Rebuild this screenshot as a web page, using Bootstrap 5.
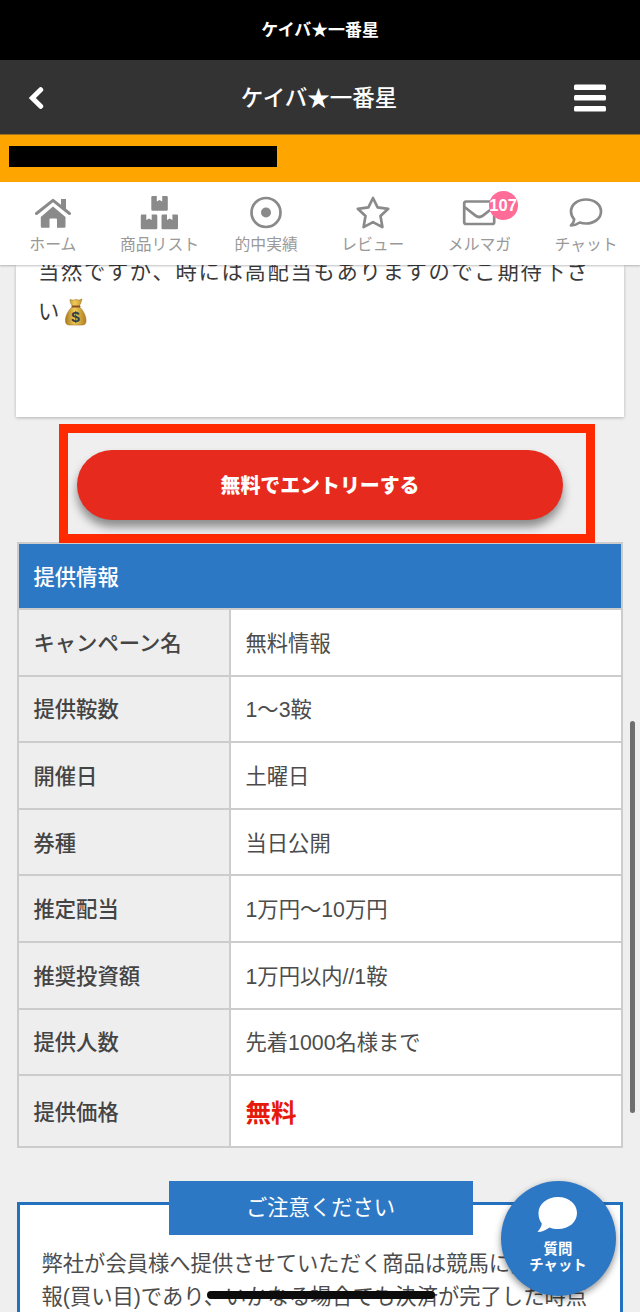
<!DOCTYPE html>
<html lang="ja">
<head>
<meta charset="utf-8">
<meta name="viewport" content="width=device-width, initial-scale=1">
<title>ケイバ★一番星</title>
<link href="https://cdn.jsdelivr.net/npm/bootstrap@5.3.0/dist/css/bootstrap.min.css" rel="stylesheet">
<style>
  body { background: #efefef; color: #444; font-family: "Noto Sans CJK JP", sans-serif; font-size: 21.3px; height: 1312px; overflow: hidden; }
  .latin-mix { font-family: "Liberation Sans", "Noto Sans CJK JP", sans-serif; }
  .status-title { height: 60px; background: #000; font-size: 16.9px; padding-bottom: 2px; }
  .app-header { height: 74px; background: #333; padding: 2px 34px 0 28px; font-size: 22.5px; font-weight: 500; }
  .app-header .header-title { padding-left: 20px; margin-top: -2px; }
  .user-strip { height: 48px; background: #ffa500; padding: 11px 9px 0; border-top: 1px solid #a0701a; }
  .user-mask { width: 268px; height: 21px; background: #000; }
  .tab-strip { height: 83px; box-shadow: 0 1px 2px rgba(0,0,0,.25); z-index: 3; }
  .tab-strip a { color: #999; font-size: 15.8px; line-height: 20px; padding-top: 11px; padding-right: 1px; }
  .tab-strip svg { width: 40px; height: 40px; margin-bottom: 1px; overflow: visible; }
  .count-bubble { top: 9px; left: 62px; width: 29px; height: 29px; background: #ff6c98; font: bold 16.5px/28px "Liberation Sans", sans-serif; }
  .intro-panel { height: 152px; margin: 0 16px; padding: 0 20px 0 22px; color: #3a3a3a; box-shadow: 0 1px 3px rgba(0,0,0,.25); overflow: hidden; }
  .intro-text { margin-top: -15px; line-height: 40.3px; letter-spacing: 1.7px; white-space: nowrap; }
  .intro-text svg { width: 22px; height: 28px; margin-left: 4px; vertical-align: -7px; }
  .entry-frame { width: 536px; height: 119px; margin: 7px 0 0 59px; border: 9px solid #ff2a00; padding: 17px 23px 0 9px; z-index: 2; }
  .entry-button { height: 70px; background: #e62a1e; color: #fff; font-size: 19.9px; font-weight: 900; box-shadow: 0 7px 10px rgba(0,0,0,.42); }
  .offer-table { width: 606px; margin: -1px 0 0 16.5px; border-collapse: collapse; table-layout: fixed; line-height: 30px; }
  .offer-table col:first-child { width: 212px; }
  .offer-table th, .offer-table td { border: 2px solid #ccc; padding: 3px 15.5px 0 15px; height: 66.6px; vertical-align: middle; }
  .offer-table th { background: #eee; font-weight: 500; }
  .offer-table thead th { background: #2d78c5; color: #fff; height: 66px; padding-top: 0; padding-bottom: 1px; }
  .offer-table td { background: #fff; color: #4c4c4c; }
  .offer-table tbody tr:last-child > * { height: 72px; }
  .offer-table tbody .price { color: #e6190d; font-size: 25.5px; font-weight: 700; }
  .caution { margin: 54px 17px 0 16.5px; height: 110px; border: 3px solid #2471bf; border-bottom: 0; padding: 43px 0 0 22px; line-height: 33.3px; white-space: nowrap; color: #4c4c4c; }
  .caution-title { left: 149px; top: -24px; width: 304px; height: 54px; background: #2d78c5; color: #fff; }
  .ink-mask { left: 187px; top: 86px; width: 228px; height: 8px; background: #0c0c0c; border-radius: 4px; }
  .chat-bubble { left: 500.5px; top: 1180.5px; width: 115px; height: 115px; background: #2d78c5; color: #fff; font-size: 14.4px; font-weight: 700; line-height: 16.5px; box-shadow: 0 3px 7px rgba(0,0,0,.45); z-index: 4; padding-top: 15px; }
  .chat-bubble svg { width: 42px; height: 38px; margin: 0 2px 6px 0; }
  .scroll-thumb { left: 630px; top: 721px; width: 5px; height: 392px; background: #6f6f6f; border-radius: 3px; z-index: 5; }
</style>
</head>
<body class="position-relative">
<div class="status-title d-flex align-items-center justify-content-center text-white fw-bold">ケイバ★一番星</div>
<header class="app-header d-flex align-items-center justify-content-between text-white">
  <svg width="16" height="24" viewBox="0 0 16 24" fill="none" stroke="#fff" stroke-width="5" stroke-linecap="round" stroke-linejoin="miter"><path d="M12.700 3.700 4.300 12l8.400 8.300"/></svg>
  <span class="header-title">ケイバ★一番星</span>
  <svg width="32" height="28" viewBox="0 0 32 28" fill="#fff"><rect y=".5" width="32" height="5.500" rx="1.500"/><rect y="11" width="32" height="5.500" rx="1.500"/><rect y="22" width="32" height="5.500" rx="1.500"/></svg>
</header>
<div class="user-strip"><div class="user-mask"></div></div>

<nav class="tab-strip row row-cols-6 g-0 bg-white position-relative text-center">
  <a class="col text-decoration-none d-flex flex-column align-items-center" href="#">
    <svg viewBox="0 0 40 40" fill="#8a8a8a"><path d="M20 13.500 32.500 24v9.500q0 1.200-1.200 1.200H24V26.500q0-1-1-1h-5.500q-1 0-1 1v8.200H9q-1.200 0-1.200-1.200V24Z"/><path d="M3.500 20.500 20 7.400l16.500 13.100" fill="none" stroke="#8a8a8a" stroke-width="3" stroke-linecap="round" stroke-linejoin="round"/><path d="M28 6h5v12l-5-4Z"/></svg>ホーム</a>
  <a class="col text-decoration-none d-flex flex-column align-items-center" href="#">
    <svg viewBox="0 0 40 40" fill="#8a8a8a"><defs><path id="box" d="M1.200 0H5.500v5.500L8.200 4l2.700 1.500V0h4.400q1.200 0 1.200 1.200v12.300q0 1.200-1.200 1.200H1.200Q0 14.700 0 13.500V1.200Q0 0 1.200 0Z"/></defs><use href="#box" x="12.300" y="3"/><use href="#box" x="1.800" y="21.500"/><use href="#box" x="22.500" y="21.500"/></svg>商品リスト</a>
  <a class="col text-decoration-none d-flex flex-column align-items-center" href="#">
    <svg viewBox="0 0 40 40"><circle cx="20" cy="19.500" r="14.500" fill="none" stroke="#8a8a8a" stroke-width="2.700"/><circle cx="20" cy="19.500" r="5" fill="#8a8a8a"/></svg>的中実績</a>
  <a class="col text-decoration-none d-flex flex-column align-items-center" href="#">
    <svg viewBox="0 0 40 40" fill="none" stroke="#8a8a8a" stroke-width="2.700" stroke-linejoin="round"><path d="m20 5 4.600 9.300 10.600 1.500-7.700 7.300 1.900 11-9.400-5-9.400 5 1.900-11-7.700-7.300 10.600-1.500Z"/></svg>レビュー</a>
  <a class="col text-decoration-none d-flex flex-column align-items-center position-relative" href="#">
    <svg viewBox="0 0 40 40" fill="none" stroke="#8a8a8a" stroke-width="2.700" stroke-linejoin="round"><rect x="5.200" y="8.500" width="30" height="22.500" rx="2"/><path d="m5.500 14 11 8.600q3.700 2.800 7.400 0L35 14"/></svg>メルマガ
    <span class="count-bubble position-absolute rounded-circle text-white d-flex justify-content-center">107</span></a>
  <a class="col text-decoration-none d-flex flex-column align-items-center" href="#">
    <svg viewBox="0 0 40 40" fill="none" stroke="#8a8a8a" stroke-width="2.700" stroke-linejoin="round"><path d="M20 6.500c8.300 0 15 5 15 12s-6.700 12-15 12c-2.200 0-4.300-.3-6.200-1-2.500 1.700-5.400 3-8.800 3 1.900-1.800 3-4 3.200-6.200C6.200 24.100 5 21.500 5 18.500c0-7 6.700-12 15-12Z"/></svg>チャット</a>
</nav>

<main>
  <section class="intro-panel bg-white">
    <p class="intro-text mb-0">当然ですが、時には高配当もありますのでご期待下さ<br>い<svg viewBox="0 0 22 28" role="img" aria-label="💰"><defs><linearGradient id="gold" x2="1"><stop stop-color="#a97b20"/><stop offset=".45" stop-color="#f0cb58"/><stop offset="1" stop-color="#b07d20"/></linearGradient></defs><path d="M5 1.500Q8 3 11 1.500q3 1.500 6-.5-1 4-3 7.500c4 3.500 7 9 7 14 0 3-1 4.500-4 4.500H4.500c-3 0-4-1.500-4-4.500 0-5 3-10.500 7-14C6 6 5 4 5 1.500Z" fill="url(#gold)" stroke="#a1731d" stroke-width=".6"/><path d="M7.500 8.500h7" stroke="#8b4c20" stroke-width="2" stroke-linecap="round"/><text x="10.500" y="24" text-anchor="middle" font-family="Liberation Sans" font-size="15.500" font-weight="700" letter-spacing="0" fill="#333b45">$</text></svg></p>
  </section>

  <div class="entry-frame position-relative">
    <a href="#" class="entry-button d-flex align-items-center justify-content-center rounded-pill text-decoration-none">無料でエントリーする</a>
  </div>

  <table class="offer-table">
    <colgroup><col><col></colgroup>
    <thead><tr><th colspan="2">提供情報</th></tr></thead>
    <tbody class="latin-mix">
      <tr><th>キャンペーン名</th><td>無料情報</td></tr>
      <tr><th>提供鞍数</th><td>1〜3鞍</td></tr>
      <tr><th>開催日</th><td>土曜日</td></tr>
      <tr><th>券種</th><td>当日公開</td></tr>
      <tr><th>推定配当</th><td>1万円〜10万円</td></tr>
      <tr><th>推奨投資額</th><td>1万円以内//1鞍</td></tr>
      <tr><th>提供人数</th><td>先着1000名様まで</td></tr>
      <tr><th>提供価格</th><td class="price">無料</td></tr>
    </tbody>
  </table>

  <section class="caution bg-white position-relative latin-mix">
    <div class="caution-title position-absolute d-flex align-items-center justify-content-center">ご注意ください</div>
    <p class="mb-0">弊社が会員様へ提供させていただく商品は競馬に関する情<br>報(買い目)であり、いかなる場合でも決済が完了した時点</p>
    <span class="ink-mask position-absolute"></span>
  </section>
</main>

<a href="#" class="chat-bubble position-absolute rounded-circle d-flex flex-column align-items-center text-center text-decoration-none">
  <svg viewBox="0 0 42 38" fill="#fff"><path d="M22 1c11 0 19 7 19 16s-8 16-19 16c-3 0-6-.4-8.500-1.500C10 34 6 36 1.500 36 4 33 5.500 30.500 5.800 27.500 3.500 24.500 2.500 21 2.500 17 2.500 8 11 1 22 1Z"/></svg>
  質問<br>チャット
</a>
<div class="scroll-thumb position-absolute"></div>
<script src="https://cdn.jsdelivr.net/npm/bootstrap@5.3.0/dist/js/bootstrap.bundle.min.js"></script>
</body>
</html>
